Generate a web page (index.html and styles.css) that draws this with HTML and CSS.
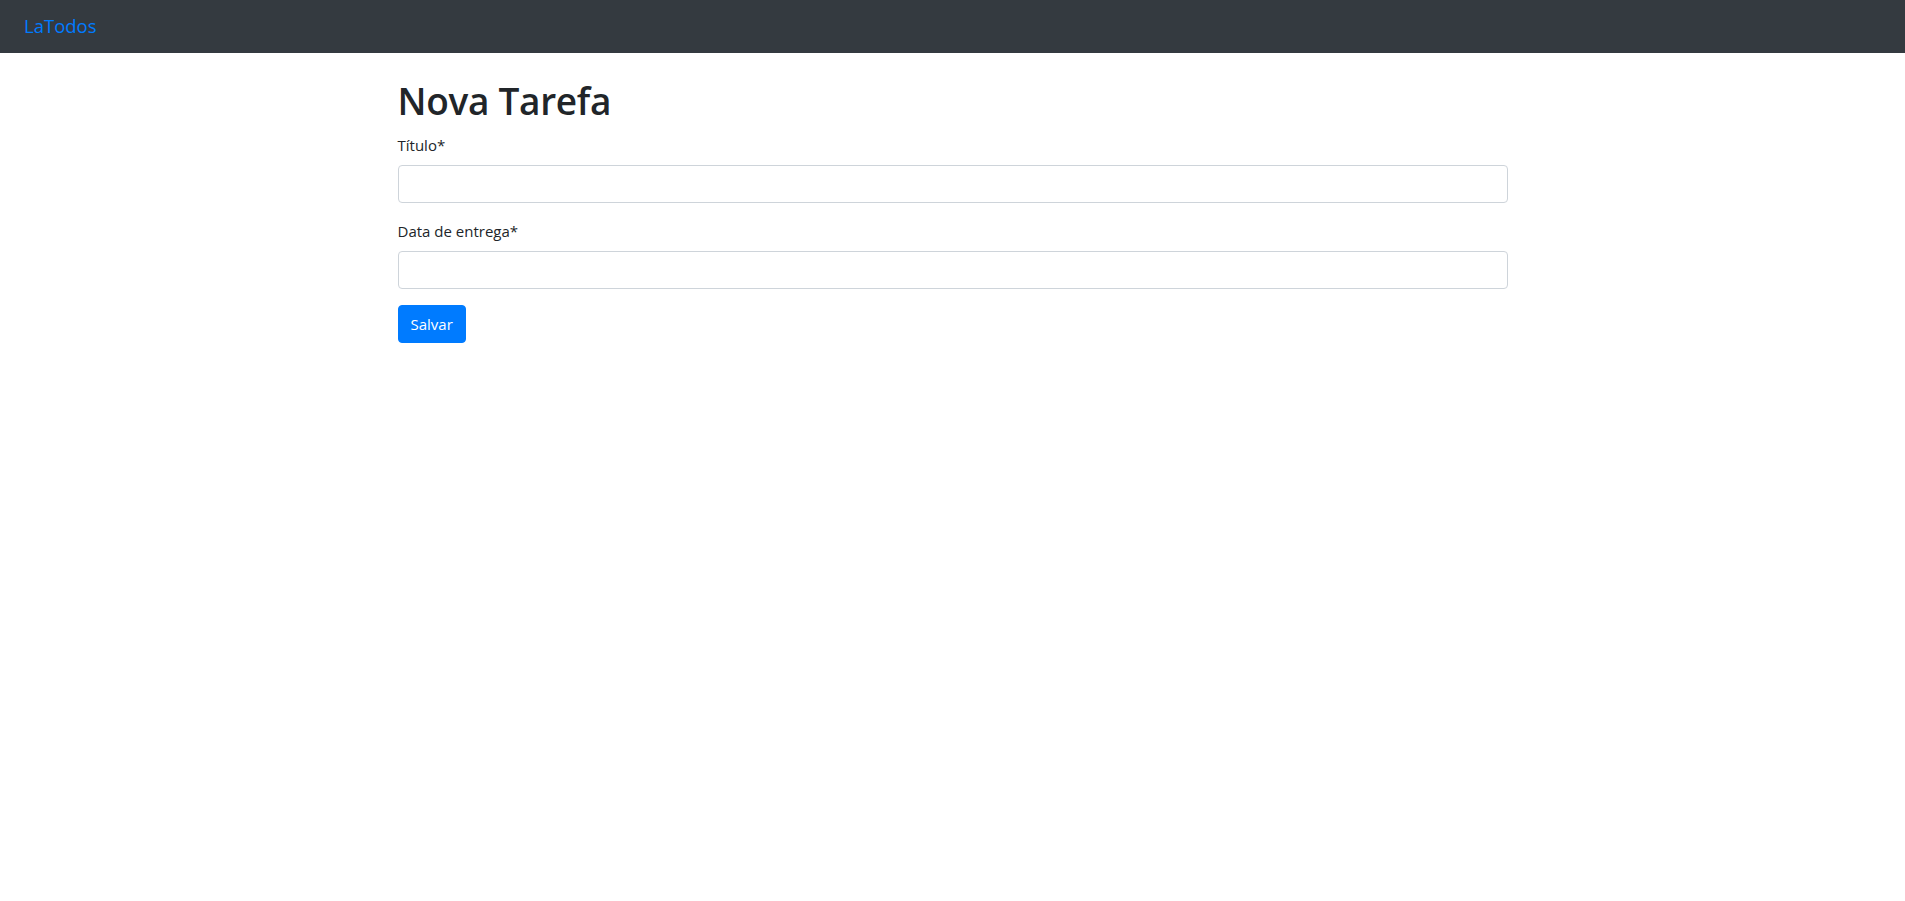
FILE: index.html
```html
<!DOCTYPE html>
<html lang="pt-BR">
<head>
<meta charset="utf-8">
<title>LaTodos</title>
<link rel="stylesheet" href="styles.css">
</head>
<body>
<nav class="navbar">
  <a class="brand" href="#">LaTodos</a>
</nav>
<main class="container">
  <h1 class="title">Nova Tarefa</h1>
  <form class="form">
    <div class="form-group">
      <label class="label" for="titulo">Título*</label>
      <input class="input" id="titulo" type="text">
    </div>
    <div class="form-group">
      <label class="label" for="data">Data de entrega*</label>
      <input class="input" id="data" type="text">
    </div>
    <button class="btn" type="button">Salvar</button>
  </form>
</main>
</body>
</html>
```

FILE: styles.css
```css
* { box-sizing: border-box; }
html, body { margin: 0; padding: 0; }
body {
  font-family: "Open Sans", "Noto Sans", "Liberation Sans", sans-serif;
  font-size: 15px;
  line-height: 1.5;
  color: #212529;
  background: #fff;
}
.navbar {
  height: 53px;
  background: #343a40;
  display: flex;
  align-items: center;
  padding: 0 24px;
}
.brand {
  color: #007bff;
  text-decoration: none;
  font-size: 18.5px;
  line-height: 1;
  margin-top: -1px;
}
.container {
  width: 1110px;
  margin: 0 auto;
  padding-top: 24px;
}
.title {
  font-size: 37px;
  font-weight: 600;
  line-height: 48px;
  margin: 0 0 8px;
  letter-spacing: -0.3px;
}
.form-group { margin-bottom: 16px; display: flex; flex-direction: column; }
.label { display: block; line-height: 24px; margin-bottom: 8px; }
.input {
  display: block;
  width: 100%;
  height: 38px;
  border: 1px solid #ced4da;
  border-radius: 4px;
  padding: 6px 12px;
  font: inherit;
  background: #fff;
}
.btn {
  display: inline-block;
  height: 38px;
  padding: 0 12px;
  border: 1px solid #007bff;
  border-radius: 4px;
  background: #007bff;
  color: #fff;
  font: inherit;
  font-size: 15px;
  cursor: pointer;
}
```
